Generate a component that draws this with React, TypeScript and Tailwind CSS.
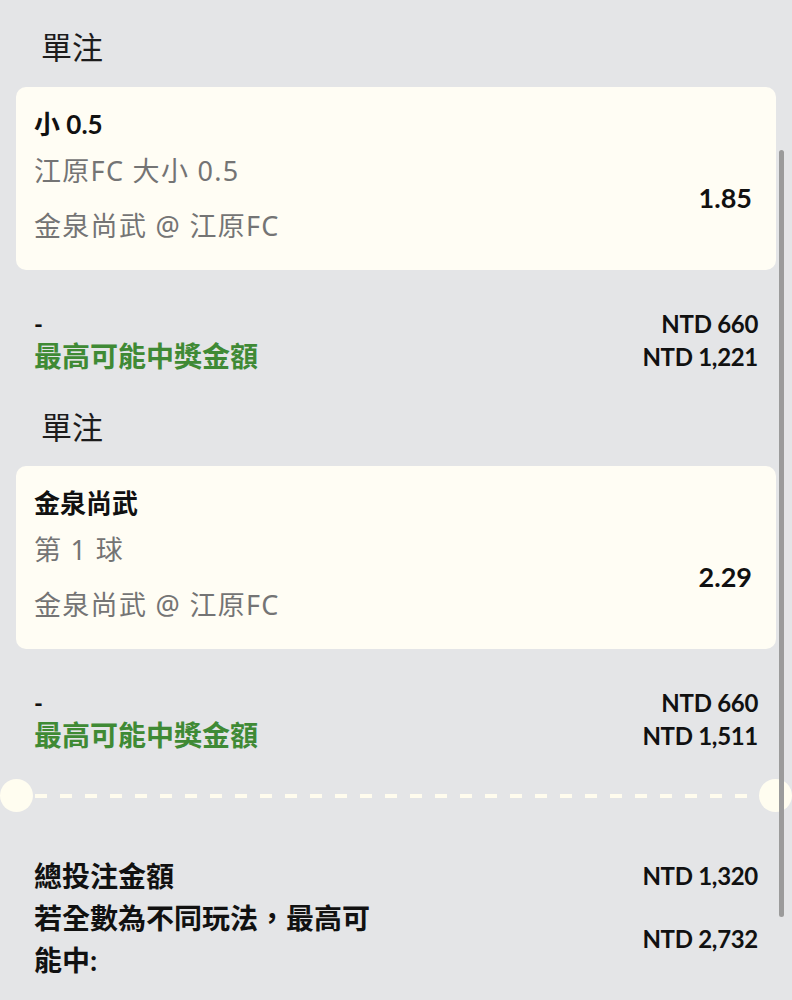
import React from "react";

const FONT = { fontFamily: 'Lato, "Noto Sans CJK TC", "Noto Sans", sans-serif' };
const GRAY_FONT = { fontFamily: '"Noto Sans", "Noto Sans CJK TC", sans-serif' };

function Heading() {
  return (
    <div className="pl-[41px] text-[31px] leading-[38px] text-[#1c1c1c]">單注</div>
  );
}

function Card({ title, line2, line3, odds }: { title: string; line2: string; line3: string; odds: string }) {
  return (
    <div className="mx-4 rounded-[10px] bg-[#fffdf4] pl-[18px] pr-[24px] pt-[19px] pb-[17px]">
      <div className="text-[26px] leading-[37px] font-bold text-[#111]">{title}</div>
      <div className="flex items-center justify-between">
        <div style={GRAY_FONT} className="text-[27px] leading-[55px] tracking-[1.3px] text-[#747474]">
          <div>{line2}</div>
          <div>{line3}</div>
        </div>
        <div className="text-[27px] font-bold text-[#111] leading-[32px]">{odds}</div>
      </div>
    </div>
  );
}

function Summary({ stake, win }: { stake: string; win: string }) {
  return (
    <div className="flex justify-between px-[34px] leading-[33px]">
      <div>
        <div className="text-[24px] font-bold text-[#111]">-</div>
        <div className="text-[28px] font-bold text-[#3f8a35]">最高可能中獎金額</div>
      </div>
      <div className="text-right text-[24px] font-bold text-[#111] tracking-[-0.3px]">
        <div>{stake}</div>
        <div>{win}</div>
      </div>
    </div>
  );
}

export default function App() {
  return (
    <div style={FONT} className="relative w-[792px] h-[1000px] overflow-hidden bg-[#e4e5e7]">
      <div className="pt-[28px]">
        <Heading />
        <div className="mt-[21px]">
          <Card title="小 0.5" line2="江原FC 大小 0.5" line3="金泉尚武 @ 江原FC" odds="1.85" />
        </div>
        <div className="mt-[37px]">
          <Summary stake="NTD 660" win="NTD 1,221" />
        </div>
        <div className="mt-[35px]">
          <Heading />
        </div>
        <div className="mt-[20px]">
          <Card title="金泉尚武" line2="第 1 球" line3="金泉尚武 @ 江原FC" odds="2.29" />
        </div>
        <div className="mt-[37px]">
          <Summary stake="NTD 660" win="NTD 1,511" />
        </div>
        <div className="mt-[27px] flex items-center h-[33px]">
          <div className="w-[33px] h-[33px] rounded-full bg-[#fffdf0] shrink-0" />
          <div className="flex-1 h-[4px] bg-[repeating-linear-gradient(90deg,#fffcee_0px,#fffcee_12px,transparent_12px,transparent_25px)] ml-[2px] mr-[2px]" />
          <div className="w-[33px] h-[33px] rounded-full bg-[#fffdf0] shrink-0" />
        </div>
        <div className="mt-[43px] px-[34px] leading-[42px] text-[#111]">
          <div className="flex justify-between items-center">
            <div className="text-[28px] font-bold">總投注金額</div>
            <div className="text-[24px] font-bold tracking-[-0.3px]">NTD 1,320</div>
          </div>
          <div className="flex justify-between items-center">
            <div className="text-[28px] font-bold w-[350px]">若全數為不同玩法，最高可能中:</div>
            <div className="text-[24px] font-bold tracking-[-0.3px]">NTD 2,732</div>
          </div>
        </div>
      </div>
      <div className="absolute right-[8px] top-[150px] w-[5px] h-[767px] rounded-full bg-[#9b9b9b]" />
    </div>
  );
}
